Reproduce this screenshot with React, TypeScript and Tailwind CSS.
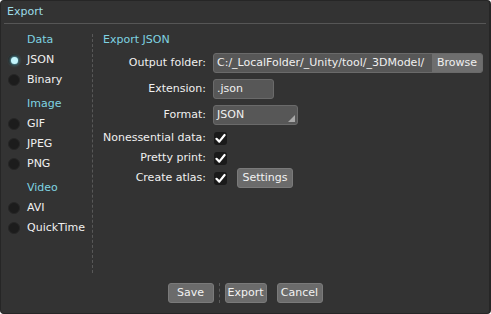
import React from "react";

const font = { fontFamily: '"DejaVu Sans", sans-serif' };

function Radio({ label, checked }: { label: string; checked?: boolean }) {
  return (
    <div className="flex items-center h-5 gap-[7px]">
      <span className="w-3 h-3 rounded-full bg-[#1c1c1c] border border-[#262626] flex items-center justify-center">
        {checked && (
          <span className="w-[7px] h-[7px] rounded-full bg-[#c4f5fc] shadow-[0_0_3px_1px_rgba(120,220,240,0.7)]" />
        )}
      </span>
      <span>{label}</span>
    </div>
  );
}

function Check() {
  return (
    <span className="w-[13px] h-[13px] rounded-[3px] bg-[#1a1a1a] flex items-center justify-center">
      <svg width="11" height="11" viewBox="0 0 11 11">
        <path d="M1.5 5.8 L4.3 8.6 L9.6 2" fill="none" stroke="#fff" strokeWidth="2.2" strokeLinecap="round" strokeLinejoin="round" />
      </svg>
    </span>
  );
}

function Button({ children, className = "" }: { children: React.ReactNode; className?: string }) {
  return (
    <button className={`h-5 rounded-[3px] bg-[#6b6b6b] border border-[#7a7a7a] text-[#f2f2f2] flex items-center justify-center ${className}`}>
      {children}
    </button>
  );
}

function Label({ children, className = "" }: { children: React.ReactNode; className?: string }) {
  return <div className={`h-5 flex items-center justify-end whitespace-nowrap ${className}`}>{children}</div>;
}

export default function App() {
  return (
    <div
      style={font}
      className="w-[491px] h-[314px] bg-[#333333] border border-[#262626] border-r-2 rounded-[4px] flex flex-col text-[11px] text-[#f0f0f0] overflow-hidden"
    >
      <div className="h-[22px] px-[6px] flex items-center text-[#9ddde8]">Export</div>
      <div className="mx-[3px] border-t border-[#565656]" />

      <div className="flex h-[249px] pt-[10px]">
        <div className="w-[92px] border-r border-dashed border-[#585858] pl-[7px]">
          <div className="h-3 leading-3 pl-[19px] text-[#7fd3e2]">Data</div>
          <div className="mt-1">
            <Radio label="JSON" checked />
            <Radio label="Binary" />
          </div>
          <div className="h-5 mt-1 leading-5 pl-[19px] text-[#7fd3e2]">Image</div>
          <Radio label="GIF" />
          <Radio label="JPEG" />
          <Radio label="PNG" />
          <div className="h-5 mt-1 leading-5 pl-[19px] text-[#7fd3e2]">Video</div>
          <Radio label="AVI" />
          <Radio label="QuickTime" />
        </div>

        <div className="flex-1 pl-[6px] pr-[6px]">
          <div className="h-3 leading-3 pl-1 text-[#7fd3e2]">Export JSON</div>
          <div className="grid grid-cols-[107px_1fr] gap-x-[7px] mt-[7px] items-center">
            <Label>Output folder:</Label>
            <div className="flex h-5 rounded-[3px] border border-[#6a6a6a] bg-[#575757] overflow-hidden">
              <span className="flex-1 pl-[3px] leading-[18px] whitespace-nowrap">C:/_LocalFolder/_Unity/tool/_3DModel/</span>
              <span className="w-[50px] bg-[#6e6e6e] text-center leading-[18px]">Browse</span>
            </div>

            <Label className="mt-[6px]">Extension:</Label>
            <div className="mt-[6px] w-[61px] h-5 rounded-[3px] border border-[#6a6a6a] bg-[#575757] pl-[3px] leading-[18px]">.json</div>

            <Label className="mt-[6px]">Format:</Label>
            <div className="mt-[6px] relative w-[85px] h-5 rounded-[3px] border border-[#6a6a6a] bg-[#575757] pl-[3px] leading-[18px]">
              JSON
              <svg className="absolute right-[2px] bottom-[2px]" width="7" height="7" viewBox="0 0 7 7">
                <path d="M7 0 L7 7 L0 7 Z" fill="#a8a8a8" />
              </svg>
            </div>

            <Label className="mt-[3px]">Nonessential data:</Label>
            <div className="h-5 mt-[3px] flex items-center pl-px"><Check /></div>

            <Label>Pretty print:</Label>
            <div className="h-5 flex items-center pl-px"><Check /></div>

            <Label>Create atlas:</Label>
            <div className="h-5 flex items-center pl-px gap-[10px]">
              <Check />
              <Button className="w-[56px]">Settings</Button>
            </div>
          </div>
        </div>
      </div>

      <div className="flex justify-center items-center mt-[10px]">
        <Button className="w-[46px]">Save</Button>
        <span className="mx-[5px] h-5 border-l border-dashed border-[#5a5a5a]" />
        <Button className="w-[42px]">Export</Button>
        <Button className="w-[46px] ml-[10px]">Cancel</Button>
      </div>
    </div>
  );
}
